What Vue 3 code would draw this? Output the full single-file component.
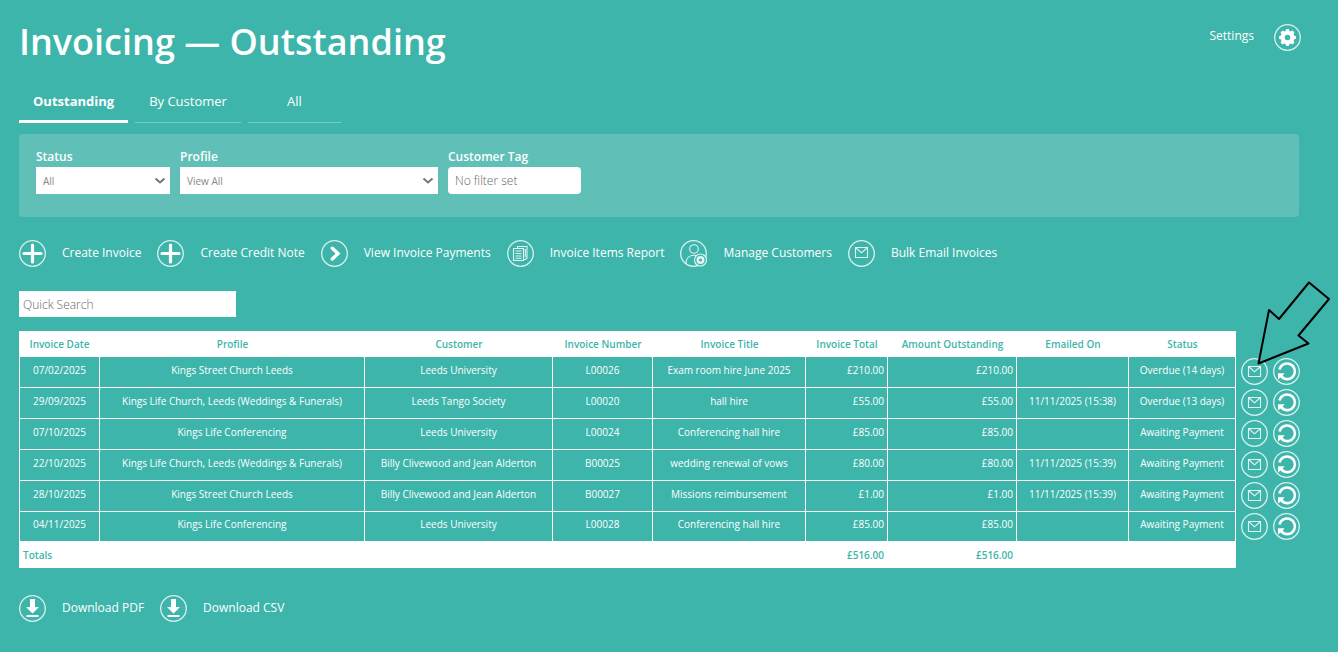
<script setup>
import { ref } from 'vue'

const status = ref('All')
const profile = ref('View All')
const tag = ref('')
const search = ref('')

const tabs = [
  { label: 'Outstanding', active: true },
  { label: 'By Customer' },
  { label: 'All' }
]

const actions = [
  { icon: 'plus', label: 'Create Invoice' },
  { icon: 'plus', label: 'Create Credit Note' },
  { icon: 'chevron', label: 'View Invoice Payments' },
  { icon: 'report', label: 'Invoice Items Report' },
  { icon: 'customer', label: 'Manage Customers' },
  { icon: 'mail', label: 'Bulk Email Invoices' }
]

const downloads = ['Download PDF', 'Download CSV']

const columns = [
  'Invoice Date', 'Profile', 'Customer', 'Invoice Number', 'Invoice Title',
  'Invoice Total', 'Amount Outstanding', 'Emailed On', 'Status'
]

const rows = [
  ['07/02/2025', 'Kings Street Church Leeds', 'Leeds University', 'L00026', 'Exam room hire June 2025', '£210.00', '£210.00', '', 'Overdue (14 days)'],
  ['29/09/2025', 'Kings Life Church, Leeds (Weddings & Funerals)', 'Leeds Tango Society', 'L00020', 'hall hire', '£55.00', '£55.00', '11/11/2025 (15:38)', 'Overdue (13 days)'],
  ['07/10/2025', 'Kings Life Conferencing', 'Leeds University', 'L00024', 'Conferencing hall hire', '£85.00', '£85.00', '', 'Awaiting Payment'],
  ['22/10/2025', 'Kings Life Church, Leeds (Weddings & Funerals)', 'Billy Clivewood and Jean Alderton', 'B00025', 'wedding renewal of vows', '£80.00', '£80.00', '11/11/2025 (15:39)', 'Awaiting Payment'],
  ['28/10/2025', 'Kings Street Church Leeds', 'Billy Clivewood and Jean Alderton', 'B00027', 'Missions reimbursement', '£1.00', '£1.00', '11/11/2025 (15:39)', 'Awaiting Payment'],
  ['04/11/2025', 'Kings Life Conferencing', 'Leeds University', 'L00028', 'Conferencing hall hire', '£85.00', '£85.00', '', 'Awaiting Payment']
]

const teeth = [0, 45, 90, 135, 180, 225, 270, 315]
</script>

<template>
  <main class="page">
    <header class="top">
      <h1>Invoicing — Outstanding</h1>
      <a href="#" class="settings">
        <span>Settings</span>
        <svg class="ico" viewBox="0 0 27 27">
          <circle class="ring" cx="13.5" cy="13.5" r="12.8" />
          <circle cx="13.5" cy="13.5" r="4.8" fill="none" stroke="#fff" stroke-width="4" />
          <path v-for="t in teeth" :key="t" d="M11.3 7.6 L12.2 5 H14.8 L15.7 7.6 Z" fill="#fff" :transform="`rotate(${t} 13.5 13.5)`" />
        </svg>
      </a>
    </header>

    <nav class="tabs">
      <a v-for="t in tabs" :key="t.label" href="#" :class="{ active: t.active }">{{ t.label }}</a>
    </nav>

    <section class="filters">
      <div class="field status">
        <label for="status">Status</label>
        <div class="select">
          <select id="status" v-model="status"><option>All</option></select>
          <svg viewBox="0 0 12 8"><path d="M1.5 1.5 L6 5.5 L10.5 1.5" /></svg>
        </div>
      </div>
      <div class="field profile">
        <label for="profile">Profile</label>
        <div class="select">
          <select id="profile" v-model="profile"><option>View All</option></select>
          <svg viewBox="0 0 12 8"><path d="M1.5 1.5 L6 5.5 L10.5 1.5" /></svg>
        </div>
      </div>
      <div class="field tag">
        <label for="tag">Customer Tag</label>
        <input id="tag" v-model="tag" type="text" placeholder="No filter set" />
      </div>
    </section>

    <nav class="actions">
      <a v-for="a in actions" :key="a.label" href="#">
        <svg class="ico" viewBox="0 0 27 27">
          <circle class="ring" cx="13.5" cy="13.5" r="12.8" />
          <path v-if="a.icon === 'plus'" d="M13.5 5 V22 M5 13.5 H22" fill="none" stroke="#fff" stroke-width="3.2" stroke-linecap="round" />
          <path v-else-if="a.icon === 'chevron'" d="M11.3 8.2 L17 13.6 L11.3 19" fill="none" stroke="#fff" stroke-width="3.4" stroke-linecap="round" />
          <g v-else-if="a.icon === 'report'" class="line">
            <path d="M10.5 8.5 V6.5 H20 V18 L18.5 19.5 H17 M6.5 8.5 H16.5 V20.5 H6.5 Z" />
            <path d="M8.5 11 H14.5 M8.5 13.5 H14.5 M8.5 16 H14.5 M8.5 18.3 H14.5 M18.3 9 V17" />
          </g>
          <g v-else-if="a.icon === 'customer'" class="line">
            <circle cx="14" cy="9" r="4.3" />
            <path d="M6 23.5 C6 18 9.5 15.3 14 15.3 C15 15.3 16 15.4 17 15.8" />
            <circle cx="20.5" cy="20" r="6" fill="#3db5ab" />
            <circle cx="20.5" cy="20" r="2.8" stroke-width="2.4" />
          </g>
          <path v-else class="line" d="M7.5 7.5 H19.5 V17.5 H7.5 Z M7.5 7.5 L13.5 12.8 L19.5 7.5" />
        </svg>
        <span>{{ a.label }}</span>
      </a>
    </nav>

    <input v-model="search" class="search" type="text" placeholder="Quick Search" aria-label="Quick Search" />

    <div class="grid">
      <table>
        <colgroup>
          <col class="c-date" /><col class="c-profile" /><col class="c-customer" />
          <col class="c-number" /><col class="c-title" /><col class="c-total" />
          <col class="c-amount" /><col class="c-emailed" /><col class="c-status" />
          <col class="c-tools" />
        </colgroup>
        <thead>
          <tr>
            <th v-for="c in columns" :key="c" scope="col">{{ c }}</th>
            <td class="tools"></td>
          </tr>
        </thead>
        <tbody>
          <tr v-for="r in rows" :key="r[3]">
            <td v-for="(v, i) in r" :key="i" :class="{ money: i === 5 || i === 6 }">{{ v }}</td>
            <td class="tools">
              <div>
                <a href="#" aria-label="Email invoice">
                  <svg class="ico" viewBox="0 0 27 27">
                    <circle class="ring" cx="13.5" cy="13.5" r="12.8" />
                    <path class="line" d="M7.5 8.5 H19.5 V18.5 H7.5 Z M7.5 8.5 L13.5 13.8 L19.5 8.5" />
                  </svg>
                </a>
                <a href="#" aria-label="Refresh invoice">
                  <svg class="ico" viewBox="0 0 27 27">
                    <circle class="ring" cx="13.5" cy="13.5" r="12.8" />
                    <path d="M6.5 11.5 A7.8 7.8 0 1 1 9.5 19.6" fill="none" stroke="#fff" stroke-width="2.6" />
                    <path d="M5 15.2 H11.6 L9.8 17.4 L11.4 19.4 L9.4 21.2 L7.6 19.6 L5 21.6 Z" fill="#fff" />
                  </svg>
                </a>
              </div>
            </td>
          </tr>
        </tbody>
        <tfoot>
          <tr>
            <th scope="row" class="first">Totals</th>
            <th colspan="4"></th>
            <th class="money">£516.00</th>
            <th class="money">£516.00</th>
            <th colspan="2"></th>
            <td class="tools"></td>
          </tr>
        </tfoot>
      </table>
      <svg class="pointer" viewBox="0 0 76 86">
        <path d="M4.5 82.5 L15 29 L25 38 L55 1.5 L75 18 L44.5 54.5 L54.5 62.5 Z" fill="#3db5ab" stroke="#000" stroke-width="2" stroke-linejoin="round" />
      </svg>
    </div>

    <nav class="actions downloads">
      <a v-for="d in downloads" :key="d" href="#">
        <svg class="ico" viewBox="0 0 27 27">
          <circle class="ring" cx="13.5" cy="13.5" r="12.8" />
          <path d="M11 4 H16 V12 H20 L13.5 18.5 L7 12 H11 Z M7.5 20 H19.5 V22 H7.5 Z" fill="#fff" />
        </svg>
        <span>{{ d }}</span>
      </a>
    </nav>
  </main>
</template>

<style>
body {
  background: #3db5ab;
}
</style>

<style scoped>
.page {
  box-sizing: border-box;
  padding: 18px 37px 30px 19px;
  font-family: "Open Sans", "Noto Sans", sans-serif;
  font-size: 13px;
  color: #fff;
}

a {
  color: inherit;
  text-decoration: none;
}

.ico {
  display: block;
  flex: none;
  width: 27px;
  height: 27px;
}

.ring {
  fill: none;
  stroke: #d8f0ee;
  stroke-width: 1.3;
}

.line {
  fill: none;
  stroke: #e4f5f3;
  stroke-width: 1.1;
}

.top {
  display: flex;
  justify-content: space-between;
  align-items: flex-start;
}

h1 {
  margin: 0;
  font-size: 36px;
  line-height: 48px;
  font-weight: 600;
}

.settings {
  display: flex;
  align-items: flex-start;
  gap: 20px;
  padding-top: 6px;
  font-size: 12px;
  line-height: 24px;
}

.tabs {
  display: flex;
  gap: 7px;
  margin-top: 24px;
}

.tabs a {
  box-sizing: border-box;
  min-width: 93px;
  height: 33px;
  padding: 0 14px;
  border-bottom: 1px solid #7bccc5;
  line-height: 22px;
  text-align: center;
}

.tabs .active {
  border-bottom: 3px solid #fff;
  border-radius: 4px 4px 0 0;
  font-weight: 700;
}

.filters {
  display: flex;
  gap: 10px;
  margin: 11px 2px 0 0;
  padding: 14px 17px 23px;
  border-radius: 4px;
  background: #60c0b8;
}

.field label {
  display: block;
  margin-bottom: 2px;
  font-size: 12px;
  line-height: 17px;
  font-weight: 600;
}

.status {
  width: 134px;
}

.profile {
  width: 258px;
}

.tag {
  width: 133px;
}

.select {
  position: relative;
}

.select svg {
  position: absolute;
  right: 4px;
  top: 10px;
  width: 12px;
  height: 8px;
  fill: none;
  stroke: #777;
  stroke-width: 2;
  pointer-events: none;
}

select,
input {
  display: block;
  box-sizing: border-box;
  width: 100%;
  height: 27px;
  margin: 0;
  padding: 0 7px;
  border: 0;
  border-radius: 0;
  outline: 0;
  background: #fff;
  color: #777;
  font: 300 12px "Open Sans", "Noto Sans", sans-serif;
}

select {
  appearance: none;
  color: #888;
  font-size: 10px;
  font-weight: 400;
}

.tag input {
  border-radius: 4px;
}

input::placeholder {
  color: #666;
  opacity: 1;
}

.actions {
  display: flex;
  flex-wrap: wrap;
  gap: 16px;
  margin-top: 23px;
}

.actions a {
  display: flex;
  gap: 16px;
  font-size: 12px;
  line-height: 25px;
}

.search {
  width: 217px;
  height: 26px;
  margin-top: 24px;
  padding: 0 4px;
}

.grid {
  position: relative;
  margin-top: 14px;
}

table {
  width: 100%;
  table-layout: fixed;
  border-spacing: 0;
  font-size: 10px;
  line-height: 14px;
}

.c-date { width: 81px; }
.c-profile { width: 265px; }
.c-customer { width: 188px; }
.c-number { width: 100px; }
.c-title { width: 153px; }
.c-total { width: 82px; }
.c-amount { width: 129px; }
.c-emailed { width: 112px; }
.c-status { width: 107px; }
.c-tools { width: 65px; }

th {
  height: 26px;
  padding: 0;
  background: #fff;
  color: #3db5ab;
  font-weight: 600;
  text-align: center;
  white-space: nowrap;
}

td {
  box-sizing: border-box;
  height: 31px;
  padding: 0 0 5px;
  border-right: 1px solid #fff;
  border-bottom: 1px solid #fff;
  text-align: center;
  white-space: nowrap;
}

td:first-child {
  border-left: 1px solid #fff;
}

tbody tr:last-child td {
  height: 30px;
}

.money {
  padding-right: 3px;
  text-align: right;
}

th.money {
  padding-right: 4px;
}

th.first {
  padding-left: 4px;
  text-align: left;
}

td.tools {
  height: auto;
  padding: 1px 0 0 5px;
  border: 0;
  vertical-align: top;
}

.tools div {
  display: flex;
  gap: 5px;
}

.pointer {
  position: absolute;
  right: -29px;
  top: -50px;
  width: 76px;
  height: 86px;
  pointer-events: none;
}

.downloads {
  margin-top: 27px;
}
</style>
